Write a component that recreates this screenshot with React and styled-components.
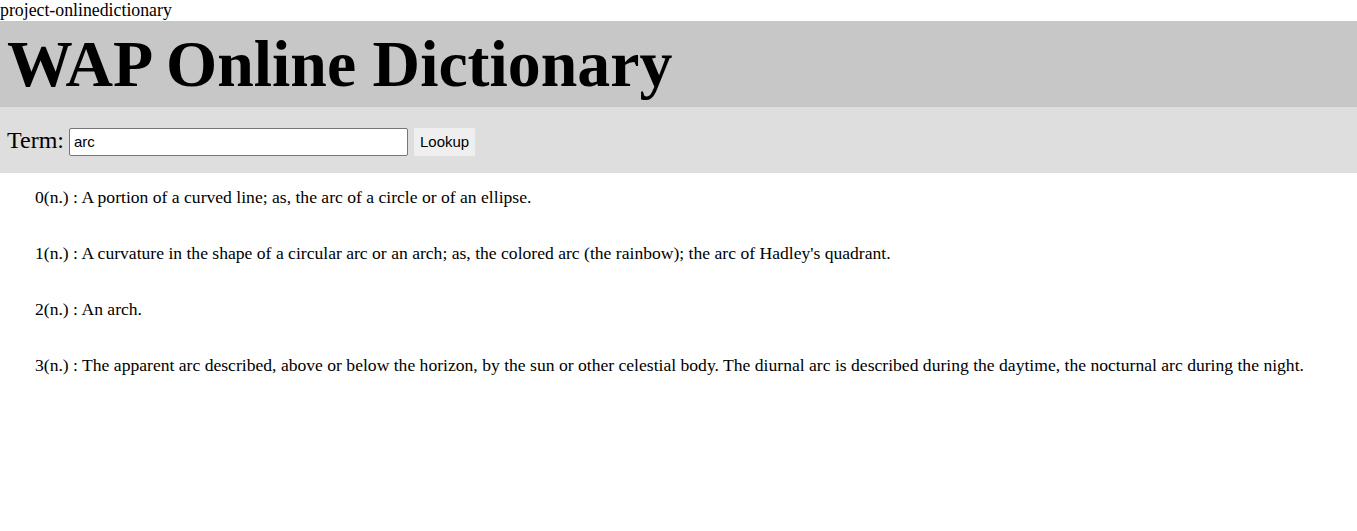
import React from "react";
import styled, { createGlobalStyle } from "styled-components";

const GlobalStyle = createGlobalStyle`
	body {
		margin: 0;
		font-family: "Liberation Serif", "Times New Roman", serif;
		background: #fff;
		color: #000;
	}
`;

const ProjectName = styled.div`
	font-size: 17.8px;
	line-height: 21px;
`;

const Header = styled.header`
	background: #c8c7c8;
	height: 86px;
	display: flex;
	align-items: center;
	padding: 0 7px;
`;

const Title = styled.h1`
	margin: 0;
	font-size: 65.8px;
	font-weight: bold;
	line-height: 1;
`;

const SearchBar = styled.form`
	background: #dfdede;
	height: 66px;
	display: flex;
	align-items: center;
	padding: 0 6px 0 7px;
	gap: 5px;
`;

const Label = styled.label`
	font-size: 24px;
`;

const Input = styled.input`
	width: 339px;
	height: 28px;
	box-sizing: border-box;
	border: 1px solid #767676;
	border-radius: 2px;
	padding: 1px 4px;
	font-family: "Liberation Sans", Arial, sans-serif;
	font-size: 15px;
	margin-top: 3px;
`;

const Button = styled.button`
	height: 28px;
	padding: 0 6px;
	margin-left: 1px;
	border: none;
	background: #efefef;
	font-family: "Liberation Sans", Arial, sans-serif;
	font-size: 15px;
	color: #000;
	margin-top: 3px;
`;

const Definitions = styled.div`
	padding: 14px 0 0 35px;
	display: flex;
	flex-direction: column;
	gap: 36px;
`;

const Definition = styled.div`
	font-size: 17.6px;
	line-height: 20px;
`;

const definitions = [
	"A portion of a curved line; as, the arc of a circle or of an ellipse.",
	"A curvature in the shape of a circular arc or an arch; as, the colored arc (the rainbow); the arc of Hadley's quadrant.",
	"An arch.",
	"The apparent arc described, above or below the horizon, by the sun or other celestial body. The diurnal arc is described during the daytime, the nocturnal arc during the night.",
];

const App = () => {
	return (
		<>
			<GlobalStyle />
			<ProjectName>project-onlinedictionary</ProjectName>
			<Header>
				<Title>WAP Online Dictionary</Title>
			</Header>
			<SearchBar onSubmit={(e) => e.preventDefault()}>
				<Label htmlFor="term">Term:</Label>
				<Input id="term" defaultValue="arc" />
				<Button type="submit">Lookup</Button>
			</SearchBar>
			<Definitions>
				{definitions.map((d, i) => (
					<Definition key={i}>
						{i}(n.) : {d}
					</Definition>
				))}
			</Definitions>
		</>
	);
};

export default App;
